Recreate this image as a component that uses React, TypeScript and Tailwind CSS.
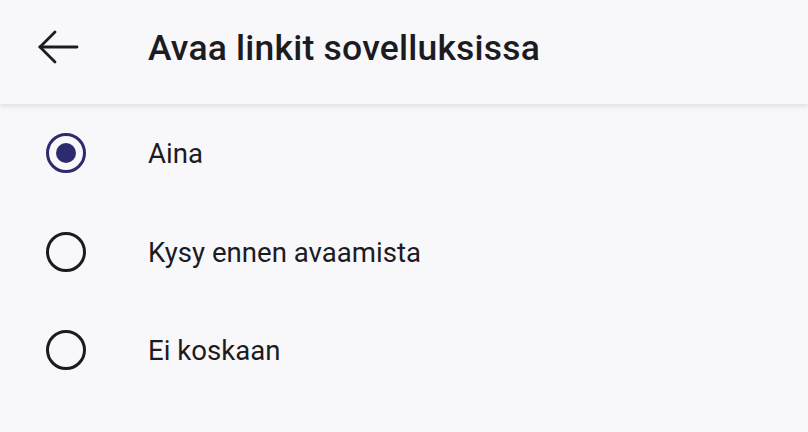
const options = ["Aina", "Kysy ennen avaamista", "Ei koskaan"];

function Radio({ checked }: { checked: boolean }) {
  return (
    <span
      className={`flex h-[40px] w-[40px] items-center justify-center rounded-full border-[3.5px] ${
        checked ? "border-[#2e2a6e]" : "border-[#1c1b1f]"
      }`}
    >
      {checked && <span className="h-[20px] w-[20px] rounded-full bg-[#2e2a6e]" />}
    </span>
  );
}

export default function App() {
  const selected = 0;

  return (
    <div
      className="h-[432px] w-[808px] overflow-hidden bg-[#f8f8fb] text-[#1c1b1f]"
      style={{ fontFamily: "Roboto, 'Noto Sans', sans-serif" }}
    >
      {/* yläpalkki */}
      <header className="relative z-10 flex h-[104px] items-center bg-[#f8f8fb] pb-[6px] shadow-[0_3px_5px_rgba(0,0,0,0.09)]">
        <button type="button" className="ml-[36px] -mt-[4px] flex h-[44px] w-[44px] items-center justify-center">
          <svg width="42" height="36" viewBox="0 0 42 36" fill="none" stroke="#1c1b1f" strokeWidth="2.8" strokeLinecap="round">
            <path d="M40 18H3" />
            <path d="M18 3L3 18l15 15" />
          </svg>
        </button>
        <h1 className="ml-[68px] text-[35.5px] font-medium leading-none tracking-[0.2px]">Avaa linkit sovelluksissa</h1>
      </header>

      {/* vaihtoehdot */}
      <ul className="pt-[0px]">
        {options.map((label, i) => (
          <li key={label} className="flex h-[98.5px] items-center">
            <span className="ml-[46px]">
              <Radio checked={i === selected} />
            </span>
            <span className="ml-[62px] pt-[2px] text-[27.6px] leading-none">{label}</span>
          </li>
        ))}
      </ul>
    </div>
  );
}
